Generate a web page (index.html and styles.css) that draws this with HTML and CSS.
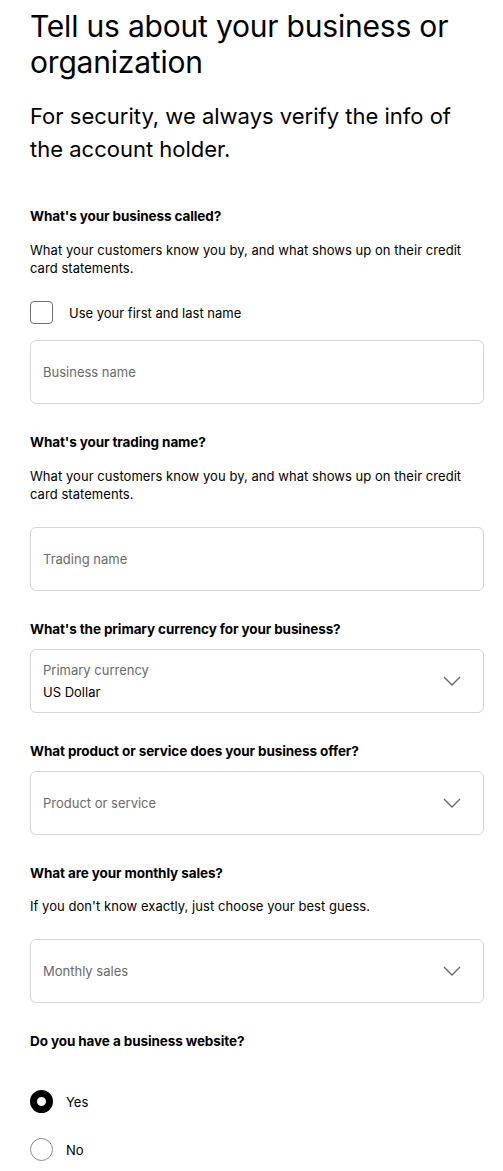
FILE: index.html
```html
<!DOCTYPE html>
<html lang="en">
<head>
<meta charset="utf-8">
<title>Tell us about your business</title>
<link rel="stylesheet" href="styles.css">
</head>
<body>
<main class="page">
  <h1 class="title">Tell us about your business or organization</h1>
  <p class="subtitle">For security, we always verify the info of the account holder.</p>

  <section class="field">
    <h2 class="label">What's your business called?</h2>
    <p class="desc">What your customers know you by, and what shows up on their credit card statements.</p>
    <label class="check">
      <span class="checkbox"></span>
      <span class="check-text">Use your first and last name</span>
    </label>
    <div class="input"><span class="placeholder">Business name</span></div>
  </section>

  <section class="field">
    <h2 class="label">What's your trading name?</h2>
    <p class="desc">What your customers know you by, and what shows up on their credit card statements.</p>
    <div class="input"><span class="placeholder">Trading name</span></div>
  </section>

  <section class="field">
    <h2 class="label tight">What's the primary currency for your business?</h2>
    <div class="input select">
      <div class="stack">
        <span class="placeholder">Primary currency</span>
        <span class="value">US Dollar</span>
      </div>
      <svg class="chev" width="18" height="10" viewBox="0 0 18 10"><path d="M1 1 L9 9 L17 1" fill="none" stroke="#6a6a6a" stroke-width="1.4"/></svg>
    </div>
  </section>

  <section class="field">
    <h2 class="label tight">What product or service does your business offer?</h2>
    <div class="input select">
      <span class="placeholder">Product or service</span>
      <svg class="chev" width="18" height="10" viewBox="0 0 18 10"><path d="M1 1 L9 9 L17 1" fill="none" stroke="#6a6a6a" stroke-width="1.4"/></svg>
    </div>
  </section>

  <section class="field">
    <h2 class="label">What are your monthly sales?</h2>
    <p class="desc single">If you don't know exactly, just choose your best guess.</p>
    <div class="input select">
      <span class="placeholder">Monthly sales</span>
      <svg class="chev" width="18" height="10" viewBox="0 0 18 10"><path d="M1 1 L9 9 L17 1" fill="none" stroke="#6a6a6a" stroke-width="1.4"/></svg>
    </div>
  </section>

  <section class="field">
    <h2 class="label">Do you have a business website?</h2>
    <div class="radios">
      <label class="radio-row"><span class="radio on"></span><span class="radio-text">Yes</span></label>
      <label class="radio-row"><span class="radio"></span><span class="radio-text">No</span></label>
    </div>
  </section>
</main>
</body>
</html>
```

FILE: styles.css
```css
* { box-sizing: border-box; }
html, body { margin: 0; padding: 0; background: #ffffff; }
body {
  font-family: Inter, "Noto Sans", "Liberation Sans", sans-serif;
  color: #000000;
}
.page {
  width: 454px;
  margin-left: 30px;
  padding-top: 8px;
}
.title {
  margin: 0;
  font-size: 30px;
  line-height: 36px;
  font-weight: 400;
  letter-spacing: -0.2px;
}
.subtitle {
  margin: 20px 0 0;
  font-size: 22px;
  line-height: 33px;
  font-weight: 400;
}
.field { margin-top: 29px; }
.field:first-of-type { margin-top: 41px; }
.label {
  margin: 0;
  font-size: 13.5px;
  line-height: 18px;
  font-weight: 700;
  letter-spacing: -0.1px;
}
.desc {
  margin: 16px 0 0;
  font-size: 13px;
  line-height: 18px;
  letter-spacing: 0.05px;
}
.desc.single { margin-top: 15px; }
.check {
  display: flex;
  align-items: center;
  gap: 16px;
  margin-top: 24px;
}
.checkbox {
  width: 23px;
  height: 23px;
  border: 1px solid #6f6f6f;
  border-radius: 4px;
  flex: none;
}
.check-text { font-size: 13px; line-height: 18px; }
.input {
  display: flex;
  align-items: center;
  height: 64px;
  border: 1px solid #d6d6d6;
  border-radius: 6px;
  padding: 0 22px 0 12px;
  margin-top: 16px;
}
.desc + .input { margin-top: 24px; }
.label.tight + .input { margin-top: 11px; }
.select { justify-content: space-between; }
.placeholder { font-size: 13px; line-height: 18px; color: #6b6b6b; }
.stack { display: flex; flex-direction: column; gap: 4px; }
.value { font-size: 13px; line-height: 18px; color: #000; }
.chev { flex: none; }
.radios {
  display: flex;
  flex-direction: column;
  gap: 25px;
  margin-top: 40px;
}
.radio-row { display: flex; align-items: center; gap: 13px; }
.radio {
  width: 23px;
  height: 23px;
  border-radius: 50%;
  border: 1px solid #8a8a8a;
  flex: none;
}
.radio.on { border: 7.5px solid #000; background: #fff; }
.radio-text { font-size: 13px; line-height: 18px; }
```
